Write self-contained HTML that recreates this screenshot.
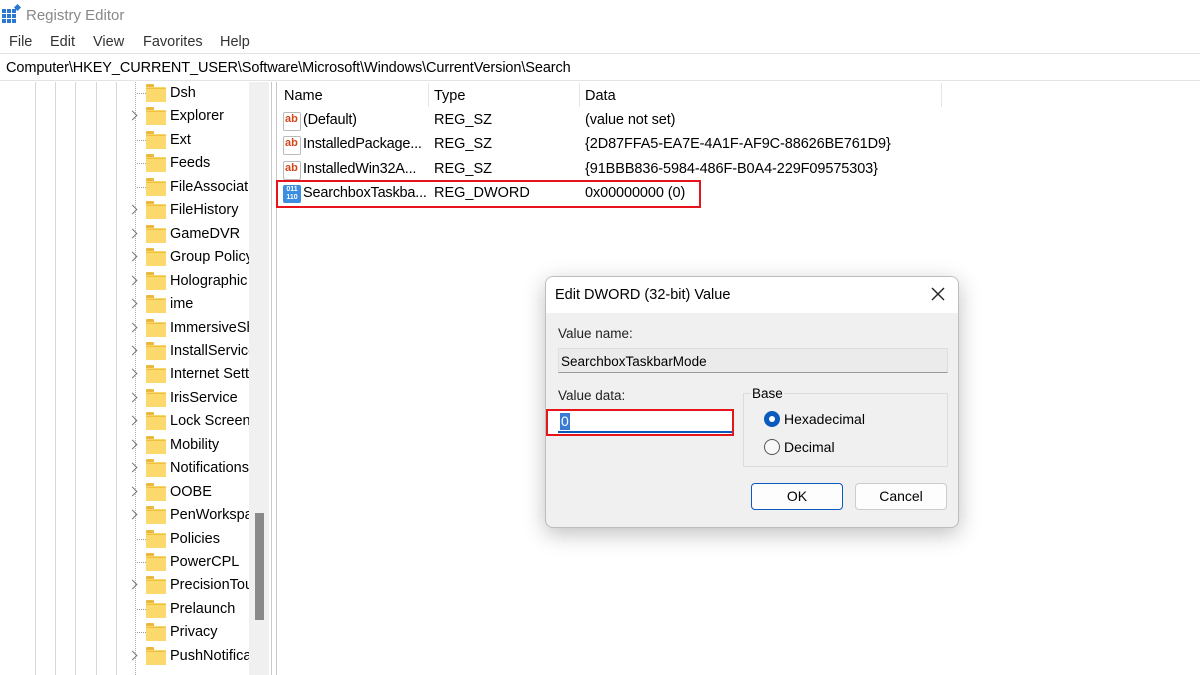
<!DOCTYPE html>
<html style="overflow:hidden;height:675px"><head><meta charset="utf-8"><style>
*{margin:0;padding:0;box-sizing:border-box}
body{width:1200px;height:675px;overflow:hidden;background:#fff;font-family:"Liberation Sans",sans-serif;color:#000;position:relative}
.a{position:absolute;white-space:nowrap}
.t{font-size:14.5px}
.vl{position:absolute;top:82px;height:593px;width:1px;background:#d8d8d8}
.dot{position:absolute;border-top:1px dotted #999;width:9px}
.chev{position:absolute;width:7px;height:7px;border-right:1.3px solid #777;border-top:1.3px solid #777;transform:rotate(45deg)}
.fold{position:absolute;width:20px;height:14px;background:#f9d66a;border-radius:1px}
.fold:before{content:"";position:absolute;left:0;top:-3px;width:8px;height:3px;background:#eab83e;border-radius:1px 1px 0 0}
.fold:after{content:"";position:absolute;left:0;top:1px;width:20px;height:13px;background:#fbd96c;border-top:1px solid #f0c040}
</style></head><body>
<svg class="a" style="left:2px;top:4px" width="20" height="20"><rect x="0" y="5" width="4" height="4" fill="#2a78d0"/><rect x="5" y="5" width="4" height="4" fill="#2a78d0"/><rect x="10" y="5" width="4" height="4" fill="#2a78d0"/><rect x="0" y="10" width="4" height="4" fill="#2a78d0"/><rect x="5" y="10" width="4" height="4" fill="#2a78d0"/><rect x="10" y="10" width="4" height="4" fill="#2a78d0"/><rect x="0" y="15" width="4" height="4" fill="#2a78d0"/><rect x="5" y="15" width="4" height="4" fill="#2a78d0"/><rect x="10" y="15" width="4" height="4" fill="#2a78d0"/><rect x="13" y="1" width="5" height="5" fill="#2a78d0" transform="rotate(45 15.5 3.5)"/></svg>
<div class="a" style="left:26px;top:7px;font-size:15px;color:#888">Registry Editor</div>
<div class="a t" style="left:9px;top:34px;color:#333">File</div>
<div class="a t" style="left:50px;top:34px;color:#333">Edit</div>
<div class="a t" style="left:93px;top:34px;color:#333">View</div>
<div class="a t" style="left:143px;top:34px;color:#333">Favorites</div>
<div class="a t" style="left:220px;top:34px;color:#333">Help</div>
<div class="a" style="left:0;top:53px;width:1200px;height:1px;background:#e3e3e3"></div>
<div class="a t" style="left:6px;top:60px;letter-spacing:-0.1px">Computer\HKEY_CURRENT_USER\Software\Microsoft\Windows\CurrentVersion\Search</div>
<div class="a" style="left:0;top:80px;width:1200px;height:1px;background:#e3e3e3"></div>
<div class="vl" style="left:35px"></div><div class="vl" style="left:55px"></div><div class="vl" style="left:75px"></div><div class="vl" style="left:96px"></div><div class="vl" style="left:116px"></div>
<div class="a" style="left:135px;top:82px;width:1px;height:593px;border-left:1px dotted #aaa"></div>
<div id="tree"></div>
<div class="a" style="left:249px;top:82px;width:20px;height:593px;background:#f0f0f0"></div>
<div class="a" style="left:255px;top:513px;width:9px;height:107px;background:#8a8a8a"></div>
<div class="a" style="left:271px;top:82px;width:1px;height:593px;background:#c8c8c8"></div>
<div class="a" style="left:276px;top:82px;width:1px;height:593px;background:#c8c8c8"></div>
<div class="a t" style="left:284px;top:88px">Name</div>
<div class="a t" style="left:434px;top:88px">Type</div>
<div class="a t" style="left:585px;top:88px">Data</div>
<div class="a" style="left:428px;top:83px;width:1px;height:24px;background:#e5e5e5"></div>
<div class="a" style="left:579px;top:83px;width:1px;height:24px;background:#e5e5e5"></div>
<div class="a" style="left:941px;top:83px;width:1px;height:24px;background:#e5e5e5"></div>
<div id="rows"></div>
<div class="a" style="left:276px;top:180px;width:425px;height:28px;border:2px solid #e8141b"></div>
<div class="a" style="left:545px;top:276px;width:414px;height:252px;background:#f0f0f0;border:1px solid #bdbdbd;border-radius:8px;box-shadow:0 6px 22px rgba(0,0,0,.25);overflow:hidden">
 <div style="height:36px;background:#fff;position:relative">
  <div class="a" style="left:9px;top:10px;font-size:14.5px">Edit DWORD (32-bit) Value</div>
  <svg class="a" style="left:385px;top:10px" width="14" height="14"><path d="M1 1L13 13M13 1L1 13" stroke="#222" stroke-width="1.4"/></svg>
 </div>
 <div class="a" style="left:12px;top:49px;font-size:13.5px;color:#222">Value name:</div>
 <div class="a" style="left:12px;top:71px;width:390px;height:25px;background:#ebebeb;border:1px solid #ddd;border-bottom:1px solid #999;font-size:13.5px;padding:5px 2px">SearchboxTaskbarMode</div>
 <div class="a" style="left:12px;top:111px;font-size:13.5px;color:#222">Value data:</div>
 <div class="a" style="left:0px;top:132px;width:188px;height:27px;background:#fff;border:2px solid #e8141b"></div>
 <div class="a" style="left:12px;top:154px;width:174px;height:2px;background:#0a5bbd"></div>
 <div class="a" style="left:14px;top:136px;font-size:14px;background:#3a7bd5;color:#fff;padding:0 1px;line-height:17px">0</div>
 <div class="a" style="left:197px;top:116px;width:205px;height:74px;border:1px solid #dcdcdc"></div>
 <div class="a" style="left:205px;top:109px;font-size:13.5px;background:#f0f0f0;padding:0 1px">Base</div>
 <div class="a" style="left:218px;top:134px;width:16px;height:16px;border-radius:50%;background:#0a5bbd"></div>
 <div class="a" style="left:223px;top:139px;width:6px;height:6px;border-radius:50%;background:#fff"></div>
 <div class="a" style="left:238px;top:134px;font-size:14px">Hexadecimal</div>
 <div class="a" style="left:218px;top:162px;width:16px;height:16px;border-radius:50%;border:1px solid #555;background:#f8f8f8"></div>
 <div class="a" style="left:238px;top:162px;font-size:14px">Decimal</div>
 <div class="a" style="left:205px;top:206px;width:92px;height:27px;background:#fdfdfd;border:1px solid #0a5bbd;border-radius:4px;text-align:center;font-size:14px;line-height:25px">OK</div>
 <div class="a" style="left:309px;top:206px;width:92px;height:27px;background:#fdfdfd;border:1px solid #ccc;border-radius:4px;text-align:center;font-size:14px;line-height:25px">Cancel</div>
</div>
<script>
var items=[["Dsh",0],["Explorer",1],["Ext",0],["Feeds",0],["FileAssociati",0],["FileHistory",1],["GameDVR",1],["Group Policy",1],["Holographic",1],["ime",1],["ImmersiveSh",1],["InstallService",1],["Internet Sett",1],["IrisService",1],["Lock Screen",1],["Mobility",1],["Notifications",1],["OOBE",1],["PenWorkspace",1],["Policies",0],["PowerCPL",0],["PrecisionTou",1],["Prelaunch",0],["Privacy",0],["PushNotificati",1]];
var h="";items.forEach(function(it,i){var y=93+i*23.45;
if(it[1])h+='<div class="chev" style="left:129px;top:'+(y-4)+'px"></div>';else h+='<div class="dot" style="left:137px;top:'+y+'px"></div>';
h+='<div class="fold" style="left:146px;top:'+(y-6)+'px"></div>';
h+='<div class="a t" style="left:170px;top:'+(y-8)+'px;width:79px;overflow:hidden">'+it[0]+'</div>';});
document.getElementById("tree").innerHTML=h;
var rows=[["(Default)","REG_SZ","(value not set)",0],["InstalledPackage...","REG_SZ","{2D87FFA5-EA7E-4A1F-AF9C-88626BE761D9}",0],["InstalledWin32A...","REG_SZ","{91BBB836-5984-486F-B0A4-229F09575303}",0],["SearchboxTaskba...","REG_DWORD","0x00000000 (0)",1]];
var r="";rows.forEach(function(x,i){var y=112+i*24.3;
if(x[3])r+='<div class="a" style="left:283px;top:'+(y)+'px;width:18px;height:18px;background:#3d8ee0;border-radius:2px;color:#fff;font-size:7px;line-height:8px;text-align:center;font-weight:bold;padding-top:1px">011<br>110</div>';
else r+='<div class="a" style="left:283px;top:'+(y)+'px;width:18px;height:19px;background:#fff;border:1px solid #bbb;border-radius:2px;color:#d2471c;font-size:11px;font-weight:bold;line-height:13px;text-align:left;padding-left:1px">ab</div>';
r+='<div class="a t" style="left:303px;top:'+y+'px;letter-spacing:-0.2px">'+x[0]+'</div><div class="a t" style="left:434px;top:'+y+'px">'+x[1]+'</div><div class="a t" style="left:585px;top:'+y+'px;letter-spacing:-0.1px">'+x[2]+'</div>';});
document.getElementById("rows").innerHTML=r;
</script>
</body></html>
